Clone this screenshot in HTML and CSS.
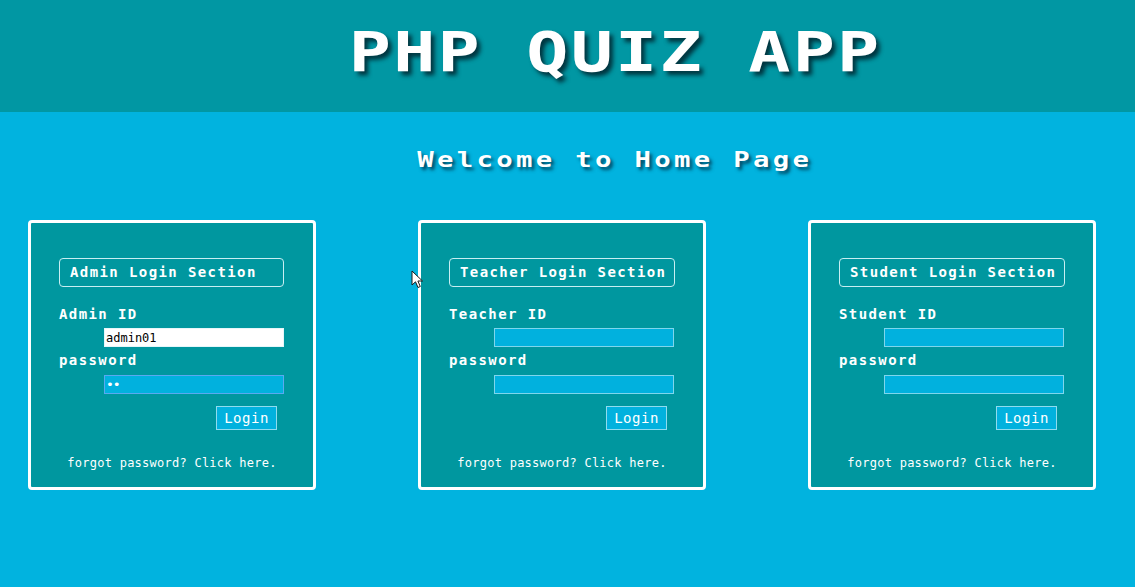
FILE: index.html
```html
<!DOCTYPE html>
<html lang="en">
<head>
<meta charset="utf-8">
<title>PHP Quiz App</title>
<link rel="stylesheet" href="styles.css">
</head>
<body>
<header class="top">
  <h1 class="app-title">PHP QUIZ APP</h1>
</header>
<main class="page">
  <div class="welcome-wrap">
    <h2 class="welcome">Welcome to Home Page</h2>
  </div>
  <div class="cards">
    <form class="card">
      <div class="card-title">Admin Login Section</div>
      <label class="lbl">Admin ID</label>
      <input class="field field-light" type="text" value="admin01">
      <label class="lbl lbl-pw">password</label>
      <input class="field field-focus" type="password" value="ab">
      <button class="btn" type="button">Login</button>
      <p class="forgot">forgot password? Click here.</p>
    </form>
    <form class="card">
      <div class="card-title">Teacher Login Section</div>
      <label class="lbl">Teacher ID</label>
      <input class="field" type="text">
      <label class="lbl lbl-pw">password</label>
      <input class="field" type="password">
      <button class="btn" type="button">Login</button>
      <p class="forgot">forgot password? Click here.</p>
    </form>
    <form class="card">
      <div class="card-title">Student Login Section</div>
      <label class="lbl">Student ID</label>
      <input class="field" type="text">
      <label class="lbl lbl-pw">password</label>
      <input class="field" type="password">
      <button class="btn" type="button">Login</button>
      <p class="forgot">forgot password? Click here.</p>
    </form>
  </div>
</main>
<svg class="cursor" width="13" height="19" viewBox="0 0 13 19" aria-hidden="true">
  <path d="M1 1 L1 15 L4.5 11.8 L7 17.5 L9.3 16.5 L6.9 11 L11.5 11 Z" fill="#ffffff" stroke="#1a1a1a" stroke-width="1" stroke-linejoin="round"/>
</svg>
</body>
</html>
```
FILE: styles.css
```css
html, body {
  margin: 0;
  padding: 0;
}
body {
  background: #01b3df;
  font-family: "DejaVu Sans Mono", "Liberation Mono", monospace;
  color: #ffffff;
  width: 1135px;
  height: 587px;
  overflow: hidden;
  position: relative;
}
.top {
  background: #0197a3;
  height: 112px;
  box-sizing: border-box;
  padding: 24px 0 0 92px;
}
.app-title {
  width: fit-content;
  margin: 0 auto;
  font-size: 56px;
  line-height: 56px;
  font-weight: bold;
  letter-spacing: 1.8px;
  text-indent: 1.8px;
  white-space: nowrap;
  color: #ffffff;
  transform: scaleX(1.25);
  transform-origin: 50% 50%;
  text-shadow: 3px 4px 4px rgba(0, 20, 30, 0.75);
}
.page {
  padding: 36px 0 0 0;
}
.welcome-wrap {
  padding-left: 92px;
}
.welcome {
  width: fit-content;
  margin: 0 auto;
  font-size: 21px;
  line-height: 24px;
  font-weight: bold;
  letter-spacing: 2.55px;
  text-indent: 2.55px;
  white-space: nowrap;
  transform: scaleX(1.3);
  transform-origin: 50% 50%;
  text-shadow: 2px 3px 3px rgba(0, 30, 50, 0.7);
}
.cards {
  display: flex;
  gap: 102px;
  padding-left: 28px;
  margin-top: 48px;
}
.card {
  width: 288px;
  height: 270px;
  box-sizing: border-box;
  border: 3px solid #ffffff;
  border-radius: 4px;
  background: #00979f;
  padding: 35px 0 0 28px;
  display: flex;
  flex-direction: column;
  align-items: flex-start;
  margin: 0;
}
.card-title {
  min-width: 225px;
  box-sizing: border-box;
  height: 29px;
  border: 1px solid #c8eef2;
  border-radius: 4px;
  padding: 0 8px 0 10px;
  font-size: 14px;
  line-height: 27px;
  font-weight: bold;
  letter-spacing: 1.4px;
  white-space: nowrap;
}
.lbl {
  display: block;
  margin-top: 19px;
  font-size: 14px;
  line-height: 16px;
  font-weight: bold;
  letter-spacing: 1.4px;
}
.lbl-pw {
  margin-top: 4px;
}
.field {
  display: block;
  margin: 6px 0 0 45px;
  width: 180px;
  height: 19px;
  box-sizing: border-box;
  border: 1px solid #7fd6ec;
  background: #01b1de;
  padding: 0 1px;
  font-family: "DejaVu Sans Mono", monospace;
  font-size: 12px;
  color: #ffffff;
  outline: none;
}
.lbl-pw + .field {
  margin-top: 7px;
}
.lbl-pw {
  margin-top: 5px;
}
.field-light {
  background: #ffffff;
  color: #000000;
  border-color: #e6f6fa;
}
.field-focus {
  border-color: #5aa9f0;
  font-size: 13px;
  letter-spacing: -1px;
}
.btn {
  margin: 12px 0 0 157px;
  width: 61px;
  height: 24px;
  box-sizing: border-box;
  border: 1px solid #8fdcef;
  background: #01b1de;
  color: #ffffff;
  font-family: "DejaVu Sans Mono", monospace;
  font-size: 14px;
  letter-spacing: 0.5px;
  padding: 0;
  line-height: 22px;
}
.forgot {
  align-self: stretch;
  margin: 26px 0 0 -28px;
  width: 282px;
  text-align: center;
  font-size: 12px;
  line-height: 14px;
  letter-spacing: 0.25px;
}
.cursor {
  position: absolute;
  left: 411px;
  top: 270px;
}
```
